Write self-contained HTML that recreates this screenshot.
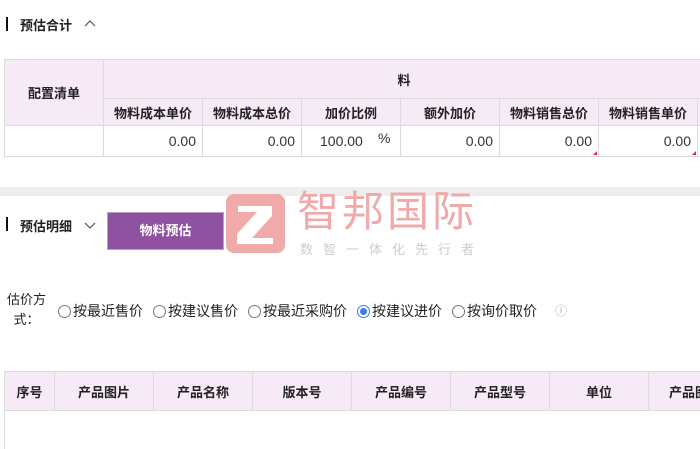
<!DOCTYPE html>
<html><head><meta charset="utf-8"><style>
*{margin:0;padding:0;box-sizing:border-box}
body{width:700px;height:449px;overflow:hidden;background:#fff;font-family:"Liberation Sans","Noto Sans CJK SC",sans-serif;color:#222;position:relative;font-size:13px}
.abs{position:absolute}
.title{font-weight:bold;font-size:13px}
.bar{position:absolute;width:2px;height:14px;background:#111}
table{border-collapse:collapse;position:absolute;table-layout:fixed}
td{border:1px solid #d9d9d9;text-align:center;font-size:13px}
th{border:1.5px solid #dcdcdc;background:#f5eaf6;font-weight:bold;font-size:13px;text-align:center}
.num{text-align:right;padding-right:6px;font-size:14px;color:#333;position:relative}
.tri{position:absolute;right:1px;bottom:1px;width:0;height:0;border-left:4px solid transparent;border-bottom:4px solid #e02040}
.radio{display:inline-block;width:13px;height:13px;border:1px solid #777;border-radius:50%;vertical-align:-2px;margin-right:2px;position:relative;background:#fff}
.radio.on{border-color:#3b7df0}
.radio.on::after{content:"";position:absolute;left:2px;top:2px;width:7px;height:7px;border-radius:50%;background:#3b7df0}
.opt{position:absolute;top:301px;font-size:14px;white-space:nowrap}
</style></head><body>
<div class="bar" style="left:6px;top:17px"></div>
<div class="abs title" style="left:20px;top:15px">预估合计</div>
<svg class="abs" style="left:84px;top:19px" width="12" height="8"><path d="M1 7 L6 2 L11 7" fill="none" stroke="#555" stroke-width="1.2"/></svg>

<table style="left:4px;top:59px;width:700px">
<colgroup><col style="width:99px"><col style="width:99px"><col style="width:99px"><col style="width:99px"><col style="width:99px"><col style="width:99px"><col style="width:99px"><col style="width:7px"></colgroup>
<tr style="height:39px"><th rowspan="2">配置清单</th><th colspan="7">料</th></tr>
<tr style="height:27px"><th>物料成本单价</th><th>物料成本总价</th><th>加价比例</th><th>额外加价</th><th>物料销售总价</th><th>物料销售单价</th><th></th></tr>
<tr style="height:31px"><td></td><td class="num">0.00</td><td class="num">0.00</td><td class="num" style="text-align:left;padding-left:18px">100.00<span style="position:absolute;left:76px;top:4px">%</span></td><td class="num">0.00</td><td class="num">0.00<div class="tri"></div></td><td class="num">0.00<div class="tri"></div></td><td></td></tr>
</table>
<div class="abs" style="left:0;top:187px;width:700px;height:9px;background:#eeeeee"></div>

<div class="bar" style="left:6px;top:217px"></div>
<div class="abs title" style="left:20px;top:216px">预估明细</div>
<svg class="abs" style="left:84px;top:222px" width="12" height="8"><path d="M1 1 L6 6 L11 1" fill="none" stroke="#555" stroke-width="1.2"/></svg>
<div class="abs" style="left:107px;top:212px;width:117px;height:38px;background:#8e52a1;border:1px solid #b8a0c0;color:#fff;font-weight:bold;text-align:center;line-height:36px">物料预估</div>

<div class="abs" style="left:226px;top:194px;width:59px;height:59px;background:#f0aaaa;border-radius:8px"></div>
<svg class="abs" style="left:226px;top:194px" width="59" height="59"><path d="M12 12 H46 V22 L26 44 H47 V50 H11 V40 L31 18 H12Z" fill="#fff"/></svg>
<div class="abs" style="left:297px;top:188px;font-size:42px;color:#f0aaaa;letter-spacing:3px;line-height:48px">智邦国际</div>
<div class="abs" style="left:300px;top:239px;font-size:13px;color:#ccc;letter-spacing:10px">数智一体化先行者</div>

<div class="abs" style="left:7px;top:290px;font-size:13px;line-height:20px;text-align:center">估价方<br>式：</div>
<div class="opt" style="left:58px"><span class="radio"></span>按最近售价</div>
<div class="opt" style="left:153px"><span class="radio"></span>按建议售价</div>
<div class="opt" style="left:248px"><span class="radio"></span>按最近采购价</div>
<div class="opt" style="left:357px"><span class="radio on"></span>按建议进价</div>
<div class="opt" style="left:452px"><span class="radio"></span>按询价取价</div>
<div class="opt" style="left:555px;color:#aaa;font-size:12px;top:302px">ⓘ</div>

<table style="left:4px;top:371px;width:750px">
<colgroup><col style="width:50px"><col style="width:99px"><col style="width:99px"><col style="width:99px"><col style="width:99px"><col style="width:99px"><col style="width:99px"><col style="width:106px"></colgroup>
<tr style="height:39px"><th>序号</th><th>产品图片</th><th>产品名称</th><th>版本号</th><th>产品编号</th><th>产品型号</th><th>单位</th><th style="text-align:left;padding-left:20px">产品图</th></tr>
</table>
<div class="abs" style="left:4px;top:410px;width:1px;height:39px;background:#ddd"></div>
</body></html>
